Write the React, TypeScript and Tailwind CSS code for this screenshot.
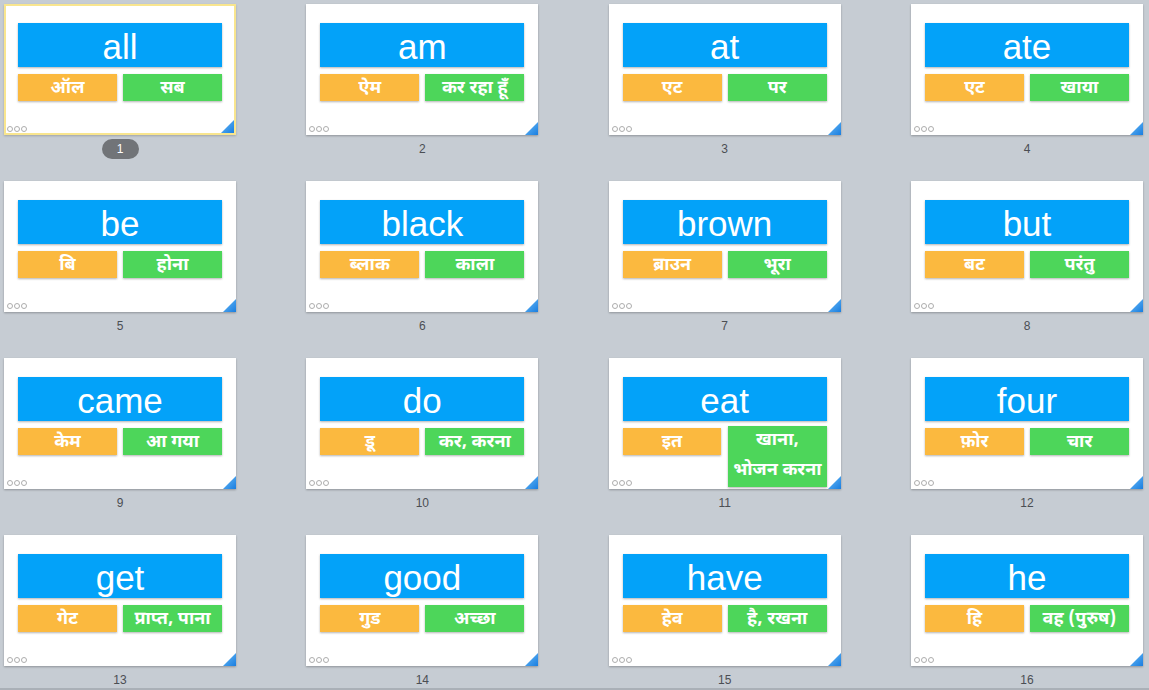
import React from 'react';

type Slide = {
  word: string;
  sound: string;
  meaning: string;
  wrap?: string[];
};

const slides: Slide[] = [
  { word: 'all', sound: 'ऑल', meaning: 'सब' },
  { word: 'am', sound: 'ऐम', meaning: 'कर रहा हूँ' },
  { word: 'at', sound: 'एट', meaning: 'पर' },
  { word: 'ate', sound: 'एट', meaning: 'खाया' },
  { word: 'be', sound: 'बि', meaning: 'होना' },
  { word: 'black', sound: 'ब्लाक', meaning: 'काला' },
  { word: 'brown', sound: 'ब्राउन', meaning: 'भूरा' },
  { word: 'but', sound: 'बट', meaning: 'परंतु' },
  { word: 'came', sound: 'केम', meaning: 'आ गया' },
  { word: 'do', sound: 'डू', meaning: 'कर, करना' },
  { word: 'eat', sound: 'इत', meaning: '', wrap: ['खाना,', 'भोजन करना'] },
  { word: 'four', sound: 'फ़ोर', meaning: 'चार' },
  { word: 'get', sound: 'गेट', meaning: 'प्राप्त, पाना' },
  { word: 'good', sound: 'गुड', meaning: 'अच्छा' },
  { word: 'have', sound: 'हेव', meaning: 'है, रखना' },
  { word: 'he', sound: 'हि', meaning: 'वह (पुरुष)' },
];

const hindi = "font-['Noto_Sans_Devanagari','Lohit_Devanagari','Noto_Sans','DejaVu_Sans',sans-serif] font-bold text-white text-[18px]";

const Corner: React.FC<{ id: string }> = ({ id }) => (
  <svg width="13" height="13" viewBox="0 0 13 13">
    <defs>
      <linearGradient id={id} x1="0" y1="0" x2="1" y2="1">
        <stop offset="0" stopColor="#6bbcf7" />
        <stop offset="1" stopColor="#1a7ee0" />
      </linearGradient>
    </defs>
    <polygon points="13,0 13,13 0,13" fill={`url(#${id})`} />
  </svg>
);

const Dots: React.FC = () => (
  <div className="flex gap-[1px]">
    {[0, 1, 2].map((d) => (
      <span key={d} className="w-[6px] h-[6px] rounded-full border border-[#adadad]" />
    ))}
  </div>
);

const Card: React.FC<{ slide: Slide; index: number }> = ({ slide, index }) => {
  const selected = index === 0;
  return (
    <div className="flex flex-col items-center">
      <div
        className={`relative w-[232px] h-[131px] bg-white shadow-[0_1px_2px_rgba(0,0,0,0.28)] ${
          selected ? 'shadow-[inset_0_0_0_2px_#f8e58e,0_1px_2px_rgba(0,0,0,0.2)]' : ''
        }`}
      >
        <div className="mt-[19px] mx-[14px] h-[44px] bg-[#03a2f9] shadow-[0_1px_2px_rgba(0,0,0,0.3)] flex items-center justify-center">
          <span className="font-['Liberation_Sans',Arial,sans-serif] text-white text-[35px] leading-none pt-[3px]">
            {slide.word}
          </span>
        </div>
        <div className="mt-[7px] mx-[14px] flex items-start gap-[6px]">
          <div className="w-[99px] h-[27px] bg-[#fbb93f] shadow-[0_1px_2px_rgba(0,0,0,0.3)] flex items-center justify-center">
            <span className={`${hindi} leading-[27px] pt-[2px]`}>{slide.sound}</span>
          </div>
          {slide.wrap ? (
            <div className="w-[99px] -mt-[2px] ml-[1px] pb-[1px] bg-[#4dd65a] shadow-[0_1px_2px_rgba(0,0,0,0.3)] flex flex-col items-center">
              {slide.wrap.map((line) => (
                <span key={line} className={`${hindi} leading-[30px] whitespace-nowrap`}>
                  {line}
                </span>
              ))}
            </div>
          ) : (
            <div className="w-[99px] h-[27px] bg-[#4dd65a] shadow-[0_1px_2px_rgba(0,0,0,0.3)] flex items-center justify-center">
              <span className={`${hindi} leading-[27px] pt-[2px] whitespace-nowrap`}>{slide.meaning}</span>
            </div>
          )}
        </div>
        <div className="absolute left-[3px] bottom-[3px]">
          <Dots />
        </div>
        <div className={`absolute ${selected ? 'right-[2px] bottom-[2px]' : 'right-0 bottom-0'} flex`}>
          <Corner id={`corner-${index}`} />
        </div>
      </div>
      <div className="mt-[4px] h-[20px] flex items-center justify-center">
        {selected ? (
          <span className="w-[37px] h-[20px] rounded-full bg-[#717478] text-white text-[12px] leading-[20px] text-center font-['Liberation_Sans',Arial,sans-serif]">
            {index + 1}
          </span>
        ) : (
          <span className="text-[#4b4e53] text-[12px] leading-[20px] font-['Liberation_Sans',Arial,sans-serif]">
            {index + 1}
          </span>
        )}
      </div>
    </div>
  );
};

export default function App() {
  return (
    <div className="w-[1149px] h-[690px] bg-[#c6ccd3] flex flex-col overflow-hidden">
      <div className="flex-1 overflow-hidden pt-[4px] pl-[4px]">
        <div className="grid grid-cols-[repeat(4,232px)] gap-x-[70.33px] auto-rows-[177px]">
          {slides.map((s, i) => (
            <Card key={s.word} slide={s} index={i} />
          ))}
        </div>
      </div>
      <div className="h-[2px] bg-[#aab0b7]" />
    </div>
  );
}
